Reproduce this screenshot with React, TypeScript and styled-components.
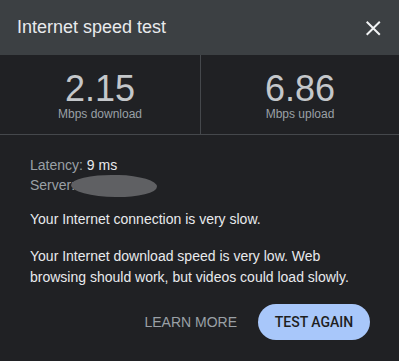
import React from "react";
import styled, { createGlobalStyle } from "styled-components";

const Global = createGlobalStyle`
  html, body {
    margin: 0;
    padding: 0;
    background: #202124;
  }
  body {
    font-family: "Liberation Sans", Arial, sans-serif;
  }
`;

const Card = styled.div`
  width: 399px;
  height: 361px;
  background: #202124;
  display: flex;
  flex-direction: column;
  overflow: hidden;
`;

const Header = styled.div`
  height: 55px;
  background: #3c4043;
  display: flex;
  align-items: center;
  justify-content: space-between;
  padding: 0 14px 0 17px;
  box-sizing: border-box;
`;

const Title = styled.h1`
  margin: 0;
  font-size: 18px;
  font-weight: 400;
  color: #e8eaed;
  font-family: "Liberation Sans", Arial, sans-serif;
`;

const CloseButton = styled.button`
  border: 0;
  background: transparent;
  padding: 0;
  margin-top: 1px;
  width: 24px;
  height: 24px;
  display: flex;
  align-items: center;
  justify-content: center;
  color: #f1f3f4;
  cursor: pointer;
`;

const Stats = styled.div`
  display: grid;
  grid-template-columns: 201px 1fr;
  border-bottom: 1px solid #45484c;
`;

const Stat = styled.div<{ $divider?: boolean }>`
  display: flex;
  flex-direction: column;
  align-items: center;
  padding: 16px 0 12px;
  border-right: ${(p) => (p.$divider ? "1px solid #45484c" : "none")};
`;

const Value = styled.div`
  font-size: 36px;
  line-height: 36px;
  color: #c4c7ca;
`;

const Unit = styled.div`
  font-size: 12px;
  line-height: 15px;
  color: #9aa0a6;
`;

const Body = styled.div`
  padding: 20px 30px 0;
  display: flex;
  flex-direction: column;
  flex: 1;
`;

const Info = styled.div`
  font-size: 14px;
  line-height: 20px;
  color: #9aa0a6;
`;

const InfoValue = styled.span`
  color: #e8eaed;
`;

const ServerLine = styled.div`
  position: relative;
`;

const Redaction = styled.span`
  position: absolute;
  left: 41px;
  top: 0px;
  width: 86px;
  height: 22px;
  background: #5f6063;
  border-radius: 50% 45% 48% 52% / 50% 50% 50% 50%;
  transform: rotate(1deg);
`;

const Paragraph = styled.p<{ $gap: number }>`
  margin: ${(p) => p.$gap}px 0 0;
  font-size: 14px;
  line-height: 21.6px;
  color: #e8eaed;
`;

const Actions = styled.div`
  margin-top: 15px;
  display: flex;
  justify-content: flex-end;
  align-items: center;
  gap: 21px;
  padding-right: 0px;
  margin-right: -1px;
`;

const TextButton = styled.button`
  border: 0;
  background: transparent;
  padding: 0;
  font-family: "Liberation Sans", Arial, sans-serif;
  font-size: 14px;
  color: #9aa0a6;
  cursor: pointer;
`;

const PillButton = styled.button`
  border: 0;
  height: 36px;
  width: 112px;
  border-radius: 18px;
  background: #a8c7fa;
  color: #1f1f1f;
  font-family: Roboto, "Liberation Sans", Arial, sans-serif;
  font-weight: 500;
  font-size: 14px;
  padding: 0;
  cursor: pointer;
`;

export default function App() {
  return (
    <>
      <Global />
      <Card>
        <Header>
          <Title>Internet speed test</Title>
          <CloseButton aria-label="Close">
            <svg width="24" height="24" viewBox="0 0 24 24" fill="currentColor">
              <path d="M19.5 6.4 18.1 5 12.25 10.85 6.4 5 5 6.4 10.85 12.25 5 18.1 6.4 19.5 12.25 13.65 18.1 19.5 19.5 18.1 13.65 12.25z" />
            </svg>
          </CloseButton>
        </Header>
        <Stats>
          <Stat $divider>
            <Value>2.15</Value>
            <Unit>Mbps download</Unit>
          </Stat>
          <Stat>
            <Value>6.86</Value>
            <Unit>Mbps upload</Unit>
          </Stat>
        </Stats>
        <Body>
          <Info>
            <div>
              Latency: <InfoValue>9 ms</InfoValue>
            </div>
            <ServerLine>
              Server:
              <Redaction />
            </ServerLine>
          </Info>
          <Paragraph $gap={14}>Your Internet connection is very slow.</Paragraph>
          <Paragraph $gap={15}>
            Your Internet download speed is very low. Web browsing should work,
            but videos could load slowly.
          </Paragraph>
          <Actions>
            <TextButton>LEARN MORE</TextButton>
            <PillButton>TEST AGAIN</PillButton>
          </Actions>
        </Body>
      </Card>
    </>
  );
}
